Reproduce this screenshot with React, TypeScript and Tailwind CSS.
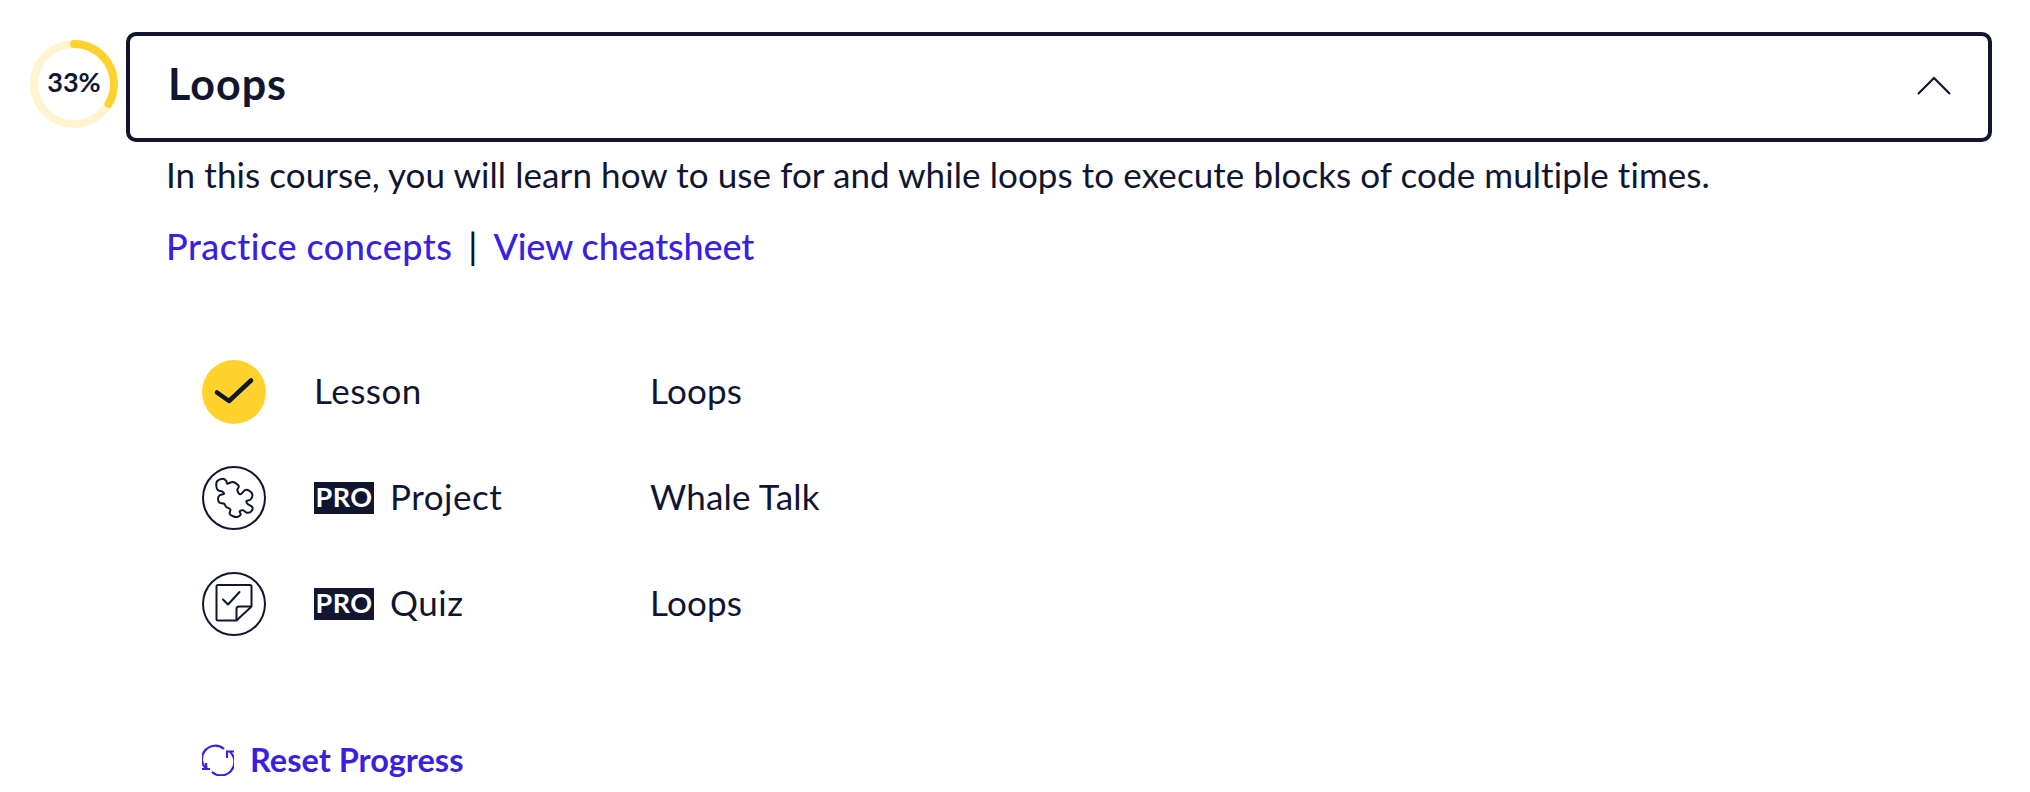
const navy = "#10162F";

// traced outline of the puzzle piece, smoothed into a closed curve
const puzzlePoints = [
  [14.3, 20], [15.3, 15], [21, 12.7], [24.3, 15], [25.3, 17.7], [31, 16], [36.7, 20], [35.3, 24.3],
  [38.3, 28.3], [42.7, 24.3], [46.7, 24.3], [50.3, 28.3], [48.7, 33.3], [44.3, 35.3], [46, 38.3],
  [50.3, 41], [49.3, 45.3], [45, 46.7], [41, 44.3], [37.7, 45.3], [38.7, 48.7], [35.3, 51], [31, 50.3],
  [27.7, 47.7], [28.3, 43.3], [24.3, 41], [22, 37.7], [17.7, 36.7], [16, 32.7], [17.7, 29.3], [22, 27.7],
  [20, 25.3], [16, 24.3],
];

function smoothPath(pts: number[][]) {
  const n = pts.length;
  let d = `M${pts[0][0]} ${pts[0][1]}`;
  for (let i = 0; i < n; i++) {
    const [p0, p1, p2, p3] = [pts[(i + n - 1) % n], pts[i], pts[(i + 1) % n], pts[(i + 2) % n]];
    const c1 = [p1[0] + (p2[0] - p0[0]) / 6, p1[1] + (p2[1] - p0[1]) / 6];
    const c2 = [p2[0] - (p3[0] - p1[0]) / 6, p2[1] - (p3[1] - p1[1]) / 6];
    d += ` C${c1[0].toFixed(1)} ${c1[1].toFixed(1)} ${c2[0].toFixed(1)} ${c2[1].toFixed(1)} ${p2[0]} ${p2[1]}`;
  }
  return d + " Z";
}

function ProgressRing() {
  return (
    <div className="relative mt-2 h-[88px] w-[88px] shrink-0">
      <svg width="88" height="88" viewBox="0 0 88 88" fill="none">
        <circle cx="44" cy="44" r="40" stroke="#FFF4CF" strokeWidth="8" />
        <path d="M44 4 A40 40 0 0 1 78.6 64" stroke="#FFD22E" strokeWidth="8" strokeLinecap="round" />
      </svg>
      <span className="absolute inset-0 flex items-center justify-center pb-[3px] text-[27px] font-bold text-[#10162F]">33%</span>
    </div>
  );
}

function DoneIcon() {
  return (
    <div className="flex h-16 w-16 items-center justify-center rounded-full bg-[#FFD22E]">
      <svg width="64" height="64" viewBox="0 0 64 64" fill="none">
        <path d="M15 32.5 L27 41 L49 20.5" stroke="#10162F" strokeWidth="4.5" strokeLinecap="round" strokeLinejoin="round" />
      </svg>
    </div>
  );
}

function PuzzleIcon() {
  return (
    <svg width="64" height="64" viewBox="0 0 64 64" fill="none" stroke={navy} strokeWidth="2">
      <circle cx="32" cy="32" r="31" />
      <path strokeLinejoin="round" d={smoothPath(puzzlePoints)} />
    </svg>
  );
}

function QuizIcon() {
  return (
    <svg width="64" height="64" viewBox="0 0 64 64" fill="none" stroke={navy} strokeWidth="2">
      <circle cx="32" cy="32" r="31" />
      <path strokeLinejoin="round" d="M34.5 48.5 H16 Q14.5 48.5 14.5 47 V14.5 Q14.5 13 16 13 H48 Q49.5 13 49.5 14.5 V34.5 L34.5 48.5 Z" />
      <path strokeLinejoin="round" d="M34.5 48.5 V37 Q34.5 34.5 37 34.5 H49.5" />
      <path strokeLinecap="round" strokeLinejoin="round" d="M21 27.5 L26 32.5 L37.5 20" />
    </svg>
  );
}

function ProBadge() {
  return (
    <span className="flex h-8 w-[60px] items-center justify-center bg-[#10162F] pb-[1px] text-[27px] font-bold tracking-[0.5px] text-white">PRO</span>
  );
}

const rows = [
  { icon: <DoneIcon />, pro: false, kind: "Lesson", title: "Loops" },
  { icon: <PuzzleIcon />, pro: true, kind: "Project", title: "Whale Talk" },
  { icon: <QuizIcon />, pro: true, kind: "Quiz", title: "Loops" },
];

export default function App() {
  return (
    <div className="h-[792px] w-[2030px] overflow-hidden bg-white font-['Lato',sans-serif] text-[#10162F] [font-variant-ligatures:none]">
      <div className="flex items-start gap-2 pl-[30px] pt-8">
        <ProgressRing />
        <div className="flex h-[110px] w-[1866px] items-center justify-between rounded-[10px] border-4 border-[#10162F] pl-[38px] pr-[36px]">
          <h2 className="pb-[6px] text-[43px] font-bold tracking-[1px]">Loops</h2>
          <svg width="36" height="20" viewBox="0 0 36 20" fill="none" className="mb-[2px]">
            <path d="M2 18 L18 2 L34 18" stroke="#10162F" strokeWidth="2.2" />
          </svg>
        </div>
      </div>

      <div className="pl-[166px] pt-[10px]">
        <p className="text-[35px] leading-[44px] tracking-[0.08px]">
          In this course, you will learn how to use for and while loops to execute blocks of code multiple times.
        </p>
        <p className="mt-[28px] flex items-center text-[36px] leading-[44px] font-medium">
          <a className="tracking-[0.45px] text-[#3A1FE3]">Practice concepts</a>
          <span className="mx-4 text-[#10162F]">|</span>
          <a className="tracking-[-0.15px] text-[#3A1FE3]">View cheatsheet</a>
        </p>
      </div>

      <div className="mt-[92px] flex flex-col gap-[42px] pl-[202px]">
        {rows.map((row) => (
          <div key={row.kind} className="flex h-16 items-center text-[35px]">
            <div className="w-[112px] shrink-0">{row.icon}</div>
            <div className="flex w-[336px] shrink-0 items-center gap-4">
              {row.pro && <ProBadge />}
              <span className="pb-1 tracking-[0.5px]">{row.kind}</span>
            </div>
            <span className="pb-1 tracking-[0.2px]">{row.title}</span>
          </div>
        ))}
      </div>

      <div className="mt-[108px] flex h-8 items-center gap-[16px] pl-[202px] text-[#3A1FE3]">
        <svg width="32" height="32" viewBox="0 0 32 32" fill="none" stroke="#3A1FE3" strokeWidth="2.2" className="shrink-0">
          <path d="M4.5 25 A13 13 0 0 1 22 5" />
          <path d="M28 8 A13 13 0 0 1 10 28" />
          <path d="M0 25 H8 M4 19 L4.5 25" />
          <path d="M24 7.5 H32 M25 7.5 V14" />
        </svg>
        <span className="text-[32.5px] font-bold">Reset Progress</span>
      </div>
    </div>
  );
}
